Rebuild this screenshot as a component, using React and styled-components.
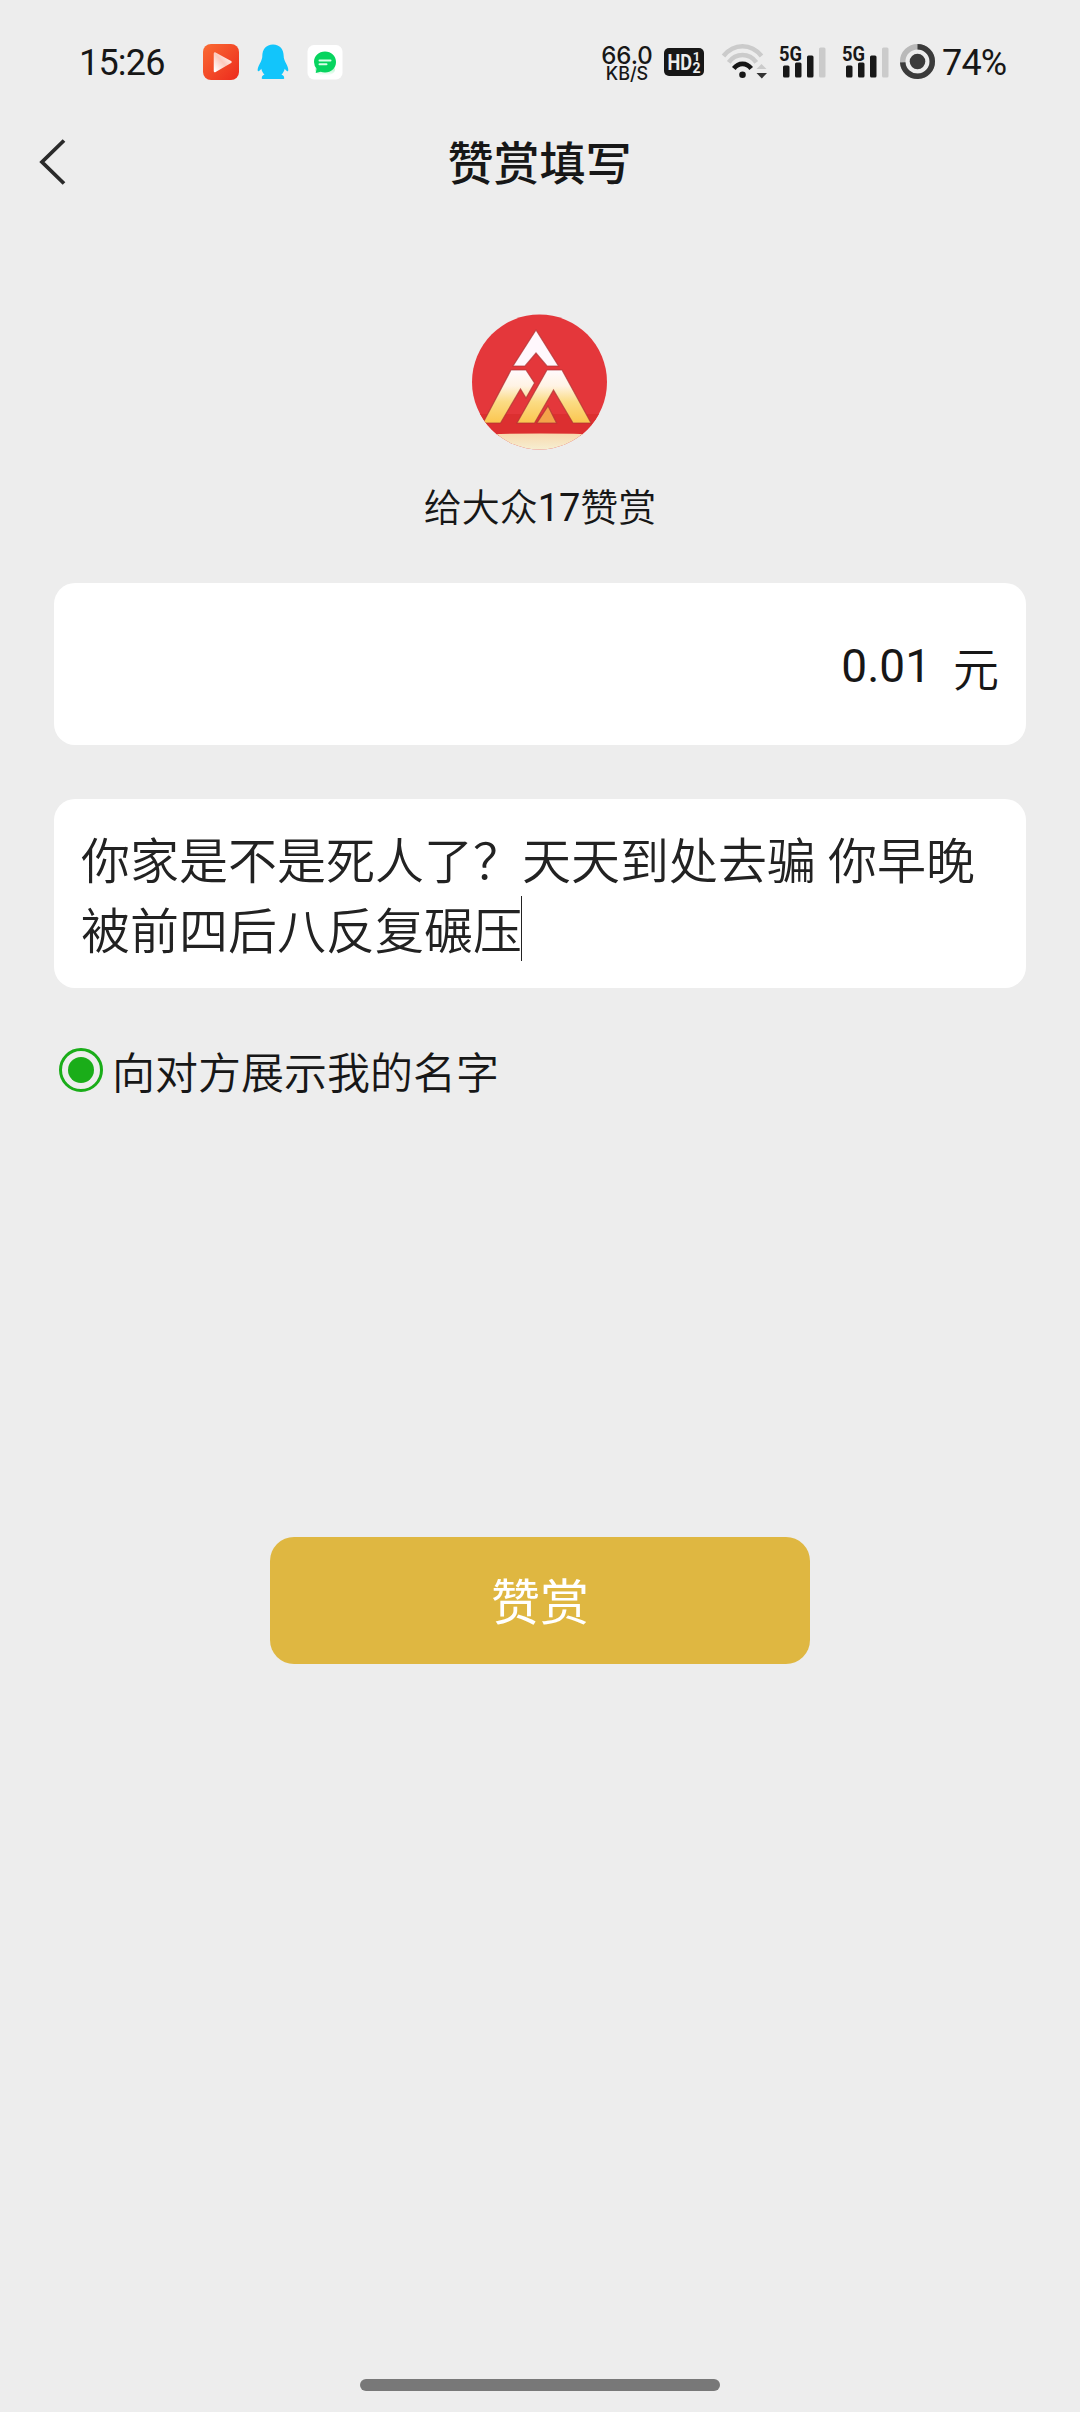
import React from 'react';
import styled, { createGlobalStyle } from 'styled-components';

const GlobalStyle = createGlobalStyle`
  * { box-sizing: border-box; }
  body {
    margin: 0;
    background: #ededed;
    color: #171717;
    font-family: Roboto, "Noto Sans CJK SC", sans-serif;
  }
  svg { display: block; flex: none; overflow: visible; }
`;

const Screen = styled.div`
  width: 1080px;
  height: 2412px;
  display: flex;
  flex-direction: column;
  align-items: center;
  background: #ededed;
  overflow: hidden;
`;

const StatusBar = styled.header`
  width: 100%;
  height: 124px;
  padding: 0 72px 0 79px;
  display: flex;
  justify-content: space-between;
  align-items: flex-start;
`;

const StatusGroup = styled.div`
  height: 124px;
  display: flex;
  align-items: center;
`;

const StatusText = styled.span`
  width: ${(p) => p.$width}px;
  margin-left: ${(p) => p.$gap || 0}px;
  padding-top: 1px;
  font: 400 36px/40px Roboto, sans-serif;
  letter-spacing: -0.8px;
  white-space: nowrap;
`;

const StatusIcon = styled.svg`
  margin-left: ${(p) => p.$gap}px;
`;

const NetSpeed = styled.div`
  width: 52px;
  padding-top: 4px;
  display: flex;
  flex-direction: column;
  align-items: center;
  font-family: Inter, sans-serif;
  font-weight: 500;
  white-space: nowrap;
`;

const SpeedValue = styled.span`
  font-size: 24px;
  line-height: 19px;
`;

const SpeedUnit = styled.span`
  font-size: 18px;
  line-height: 18px;
`;

const TitleBar = styled.div`
  width: 100%;
  height: 75px;
  padding: 0 38px;
  display: grid;
  grid-template-columns: 32px 1fr 32px;
  align-items: center;
`;

const Title = styled.h1`
  margin: 0;
  padding: 0 1px 4px 0;
  font: 500 46px/66px "Noto Sans CJK SC", sans-serif;
  text-align: center;
`;

const Recipient = styled.section`
  margin-top: 115px;
  display: flex;
  flex-direction: column;
  align-items: center;
`;

const RecipientName = styled.p`
  height: 56px;
  margin: 27px 0 0;
  font: 350 38px/56px "Noto Sans CJK SC", sans-serif;
`;

const Digits = styled.span`
  font-family: Roboto, sans-serif;
  font-weight: 400;
  line-height: 1;
`;

const Form = styled.main`
  width: 972px;
  margin-top: 50px;
  display: flex;
  flex-direction: column;
`;

const Card = styled.div`
  border-radius: 21px;
  background: #fff;
  padding: ${(p) => p.$pad};
  height: ${(p) => p.$height}px;
`;

const AmountCard = styled(Card)`
  display: flex;
  align-items: center;
  justify-content: flex-end;
  gap: 22px;
  font: 350 46px/66px "Noto Sans CJK SC", sans-serif;
`;

const MessageCard = styled(Card)`
  margin-top: 54px;
  color: #222;
  font: 350 49px/70px "Noto Sans CJK SC", sans-serif;
  word-spacing: 1px;
`;

const MessageLine = styled.div`
  display: flex;
  align-items: center;
  white-space: pre;
`;

const Caret = styled.i`
  width: 1px;
  height: 65px;
  margin-left: -1px;
  background: #222;
`;

const NameOption = styled.label`
  margin: 51px 0 0 5px;
  display: flex;
  align-items: center;
  gap: 9px;
  font: 350 43px/62px "Noto Sans CJK SC", sans-serif;
`;

const Radio = styled.span`
  width: 44px;
  height: 44px;
  border: 3px solid #1aad19;
  border-radius: 50%;
  display: grid;
  place-items: center;
  &::after {
    content: "";
    width: 26px;
    height: 26px;
    border-radius: 50%;
    background: #1aad19;
  }
`;

const SubmitButton = styled.button`
  width: 540px;
  height: 127px;
  margin-top: 436px;
  padding: 0 0 4px;
  border: 0;
  border-radius: 24px;
  background: #dfb741;
  color: #fff;
  font: 400 49px/70px "Noto Sans CJK SC", sans-serif;
`;

const HomeIndicator = styled.div`
  width: 360px;
  height: 12px;
  margin: auto 0 21px;
  border-radius: 6px;
  background: #787878;
`;

const VideoIcon = () => (
  <StatusIcon $gap={38} width="36" height="36" viewBox="0 0 36 36">
    <defs>
      <linearGradient id="video" x1="0" y1="0" x2="1" y2="1">
        <stop offset="0" stopColor="#fa6b33" />
        <stop offset="1" stopColor="#ec2a1d" />
      </linearGradient>
      <linearGradient id="play" x1="0" y1="1" x2="1" y2="0">
        <stop offset="0" stopColor="#fff" />
        <stop offset=".5" stopColor="#fcc9bd" />
        <stop offset="1" stopColor="#fff" />
      </linearGradient>
    </defs>
    <rect width="36" height="36" rx="8" fill="url(#video)" />
    <path d="M12 9.500L27.500 18 12 27Z" fill="url(#play)" stroke="url(#play)" strokeWidth="2.500" strokeLinejoin="round" />
  </StatusIcon>
);

const PenguinIcon = () => (
  <StatusIcon $gap={18} width="32" height="36" viewBox="0 0 32 36">
    <path
      fill="#12c5fb"
      d="M16 .5C9 .5 5.300 5.500 5.300 12c0 2-.5 3.500-1.600 6C1.900 21.500 0 25 .9 27c.5 1 2-.2 3.400-2.200.5 2.500 1.700 4.400 3.200 5.800-2 .8-2.700 1.800-2.700 3.600 0 .6.500.8 1.200.8h20c.7 0 1.200-.2 1.200-.8 0-1.800-.7-2.800-2.700-3.600 1.500-1.400 2.700-3.300 3.200-5.800 1.400 2 2.900 3.200 3.400 2.200.9-2-1-5.500-2.800-9-1.100-2.500-1.600-4-1.600-6C26.700 5.500 23 .5 16 .5Z"
    />
  </StatusIcon>
);

const ChatIcon = () => (
  <StatusIcon $gap={18} width="36" height="36" viewBox="0 0 36 36">
    <defs>
      <linearGradient id="glow" x1="0" y1="0" x2="0" y2="1">
        <stop offset="0" stopColor="#8ff0b4" />
        <stop offset="1" stopColor="#fff" />
      </linearGradient>
    </defs>
    <rect x=".5" y="1" width="35" height="34.500" rx="6.500" fill="#fff" />
    <ellipse cx="18" cy="26" rx="10" ry="5.500" fill="url(#glow)" />
    <path fill="#07d45f" d="M18 7.500c6.200 0 11 4.600 11 10.500s-4.800 10.500-11 10.500c-1.600 0-3-.3-4.300-.8L8.700 29l.9-4.300A10.500 10.500 0 0 1 7 18C7 12.100 11.800 7.500 18 7.500Z" />
    <path d="M12.500 16.500h11M12.500 20.200h7" stroke="#d9ffe8" strokeWidth="2" strokeLinecap="round" />
  </StatusIcon>
);

const HdIcon = () => (
  <StatusIcon $gap={11} width="40" height="28" viewBox="0 0 40 28">
    <rect width="40" height="28" rx="5" fill="#171717" />
    <g fill="#ededed" fontFamily="Roboto, sans-serif" fontWeight="700">
      <text x="3.500" y="22" fontSize="22.500" textLength="24.500" lengthAdjust="spacingAndGlyphs">HD</text>
      <text x="28.800" y="13" fontSize="13">1</text>
      <text x="28.500" y="25" fontSize="14">2</text>
    </g>
  </StatusIcon>
);

const WifiIcon = () => (
  <StatusIcon $gap={18} width="45" height="36" viewBox="0 0 45 36">
    <g fill="none" strokeWidth="4.600">
      <path d="M1.500 12C12-1 29-1 39.500 12" stroke="#cbcbcb" />
      <path d="M6.700 18.300C14 8.600 27 8.600 34.300 18.300" stroke="#cbcbcb" />
      <path d="M11.800 24.500C16.500 18.300 24.500 18.300 29.200 24.500" stroke="#171717" />
    </g>
    <circle cx="20.500" cy="30.700" r="3.300" fill="#171717" />
    <path d="M39.500 20l5 5H34.500Z" fill="#cbcbcb" />
    <path d="M34.500 29h10.500l-5.200 5.500Z" fill="#333" />
  </StatusIcon>
);

const SignalIcon = ({ gap }) => (
  <StatusIcon $gap={gap} width="48" height="36" viewBox="0 0 48 36">
    <text x="0" y="16.500" fill="#171717" fontFamily="Roboto, sans-serif" fontWeight="700" fontSize="20.500" textLength="23" lengthAdjust="spacingAndGlyphs">5G</text>
    <g fill="#171717">
      <rect x="4" y="21.500" width="6.500" height="12" rx="1.500" />
      <rect x="16" y="18.500" width="6.500" height="15" rx="1.500" />
      <rect x="28" y="11.500" width="6.500" height="22" rx="1.500" />
    </g>
    <rect x="40" y="3.500" width="6.500" height="30" rx="1.500" fill="#cbcbcb" />
  </StatusIcon>
);

const BatteryIcon = () => (
  <StatusIcon $gap={10} width="36" height="36" viewBox="0 0 36 36">
    <circle cx="17.500" cy="17.500" r="14.800" fill="none" stroke="#b9b9b9" strokeWidth="5.500" />
    <path d="M17.500 2.700A14.800 14.800 0 1 1 2.700 18.400" fill="none" stroke="#3b3b3b" strokeWidth="5.500" />
    <circle cx="17.500" cy="17.500" r="7.800" fill="#3b3b3b" />
  </StatusIcon>
);

const BackIcon = () => (
  <svg width="32" height="46" viewBox="0 0 32 46">
    <path d="M26 1.500L4 23 26 44.500" fill="none" stroke="#2a2a2a" strokeWidth="3.800" />
  </svg>
);

const Avatar = () => (
  <svg width="136" height="136" viewBox="0 0 136 136">
    <defs>
      <clipPath id="disc"><circle cx="67.500" cy="68" r="67.500" /></clipPath>
      <linearGradient id="gold" gradientUnits="userSpaceOnUse" x1="0" y1="55" x2="0" y2="108">
        <stop offset="0" stopColor="#fffafd" />
        <stop offset=".3" stopColor="#fff3e4" />
        <stop offset=".6" stopColor="#fbdc84" />
        <stop offset="1" stopColor="#fbc64f" />
      </linearGradient>
      <linearGradient id="base" x1="0" y1="0" x2="0" y2="1">
        <stop offset="0" stopColor="#f8d9ae" />
        <stop offset="1" stopColor="#f6efd2" />
      </linearGradient>
    </defs>
    <g clipPath="url(#disc)">
      <rect width="136" height="136" fill="#e4373b" />
      <path d="M0 100H136V122H0Z" fill="#dc2f30" />
      <path d="M0 121Q68 118 136 121V136H0Z" fill="url(#base)" />
      <g stroke="#ad3435" strokeWidth="1.200" strokeOpacity=".7" transform="translate(0 1)">
        <path d="M64 15L86.500 51H75L64 38 53 51H41Z" fill="#fff8fd" />
        <path d="M39 55H54L62.500 68 54 83 48.500 74 28.500 108H11Z" fill="url(#gold)" />
        <path d="M75 55H90L119 108H101L81.500 75 62.500 108H45Z" fill="url(#gold)" />
        <path d="M76 91L84.500 108H65Z" fill="#f3a34a" />
      </g>
    </g>
  </svg>
);

export default function App() {
  return (
    <Screen>
      <GlobalStyle />
      <StatusBar>
        <StatusGroup>
          <StatusText $width={86}>15:26</StatusText>
          <VideoIcon />
          <PenguinIcon />
          <ChatIcon />
        </StatusGroup>
        <StatusGroup>
          <NetSpeed>
            <SpeedValue>66.0</SpeedValue>
            <SpeedUnit>KB/S</SpeedUnit>
          </NetSpeed>
          <HdIcon />
          <WifiIcon />
          <SignalIcon gap={12} />
          <SignalIcon gap={15} />
          <BatteryIcon />
          <StatusText $width={66} $gap={6}>74%</StatusText>
        </StatusGroup>
      </StatusBar>
      <TitleBar>
        <BackIcon />
        <Title>赞赏填写</Title>
      </TitleBar>
      <Recipient>
        <Avatar />
        <RecipientName>给大众<Digits>17</Digits>赞赏</RecipientName>
      </Recipient>
      <Form>
        <AmountCard $height={162} $pad="3px 27px 0 0">
          <Digits>0.01</Digits>
          <span>元</span>
        </AmountCard>
        <MessageCard $height={189} $pad="24px 27px 0">
          <MessageLine>你家是不是死人了？天天到处去骗 你早晚</MessageLine>
          <MessageLine>被前四后八反复碾压<Caret /></MessageLine>
        </MessageCard>
        <NameOption>
          <Radio />
          <span>向对方展示我的名字</span>
        </NameOption>
      </Form>
      <SubmitButton>赞赏</SubmitButton>
      <HomeIndicator />
    </Screen>
  );
}
